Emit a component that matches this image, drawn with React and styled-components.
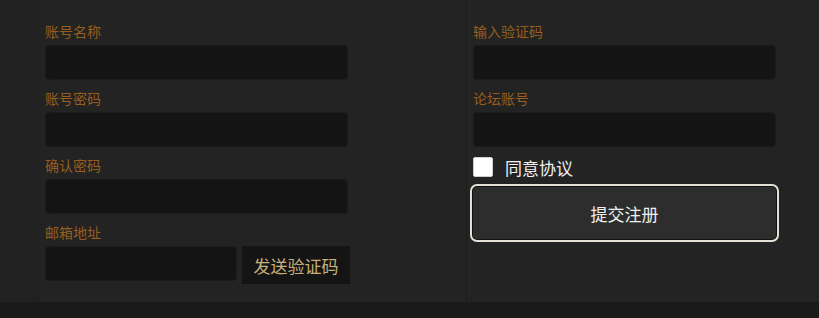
import React from 'react';
import styled, { createGlobalStyle } from 'styled-components';

const GlobalStyle = createGlobalStyle`
  body {
    margin: 0;
    background: #1a1a1a;
    font-family: "Noto Sans CJK SC", "Noto Sans", sans-serif;
  }
`;

const Page = styled.div`
  height: 302px;
  display: grid;
  grid-template-columns: 38px 428px 1fr;
  background: #232323;
`;

const Side = styled.div`
  background: #212121;
`;

const Column = styled.div`
  border-left: 1px solid #1d1d1d;
  padding: 23px 0 0 6px;
  display: flex;
  flex-direction: column;
`;

const Field = styled.div`
  display: flex;
  flex-direction: column;
  margin-bottom: 10px;
`;

const Label = styled.label`
  height: 20px;
  line-height: 16px;
  font-size: 14px;
  color: #965e1d;
  margin-bottom: 2px;
`;

const Input = styled.input`
  box-sizing: border-box;
  width: ${p => p.$w || 303}px;
  height: 35px;
  background: #141414;
  border: 1px solid #1b1b1b;
  border-radius: 4px;
  outline: none;
  color: #ddd;
`;

const Row = styled.div`
  display: flex;
  align-items: flex-start;
  gap: 5px;
`;

const SendButton = styled.button`
  width: 108px;
  height: 38px;
  background: #141414;
  border: none;
  border-radius: 0;
  padding: 0;
  font-family: inherit;
  font-size: 17px;
  color: #c8b077;
`;

const Agree = styled.label`
  display: flex;
  align-items: center;
  gap: 12px;
  height: 20px;
  font-size: 17px;
  color: #f2f2f2;
  margin-bottom: 7px;
`;

const Box = styled.span`
  box-sizing: border-box;
  width: 20px;
  height: 20px;
  background: #fff;
  border: 1px solid #cfcfcf;
  border-radius: 2px;
`;

const Submit = styled.button`
  box-sizing: border-box;
  width: 309px;
  height: 58px;
  margin-left: -3px;
  background: #2d2d2d;
  border: 2px solid #e4e0d6;
  border-radius: 7px;
  box-shadow: inset 0 0 0 1px #111;
  font-family: inherit;
  font-size: 17px;
  color: #f0f0f0;
`;

const TextField = ({ label }) => (
  <Field>
    <Label>{label}</Label>
    <Input />
  </Field>
);

export default function App() {
  return (
    <>
      <GlobalStyle />
      <Page>
        <Side />
        <Column>
          <TextField label="账号名称" />
          <TextField label="账号密码" />
          <TextField label="确认密码" />
          <Field>
            <Label>邮箱地址</Label>
            <Row>
              <Input $w={192} />
              <SendButton>发送验证码</SendButton>
            </Row>
          </Field>
        </Column>
        <Column>
          <TextField label="输入验证码" />
          <TextField label="论坛账号" />
          <Agree>
            <Box />
            同意协议
          </Agree>
          <div>
            <Submit>提交注册</Submit>
          </div>
        </Column>
      </Page>
    </>
  );
}
